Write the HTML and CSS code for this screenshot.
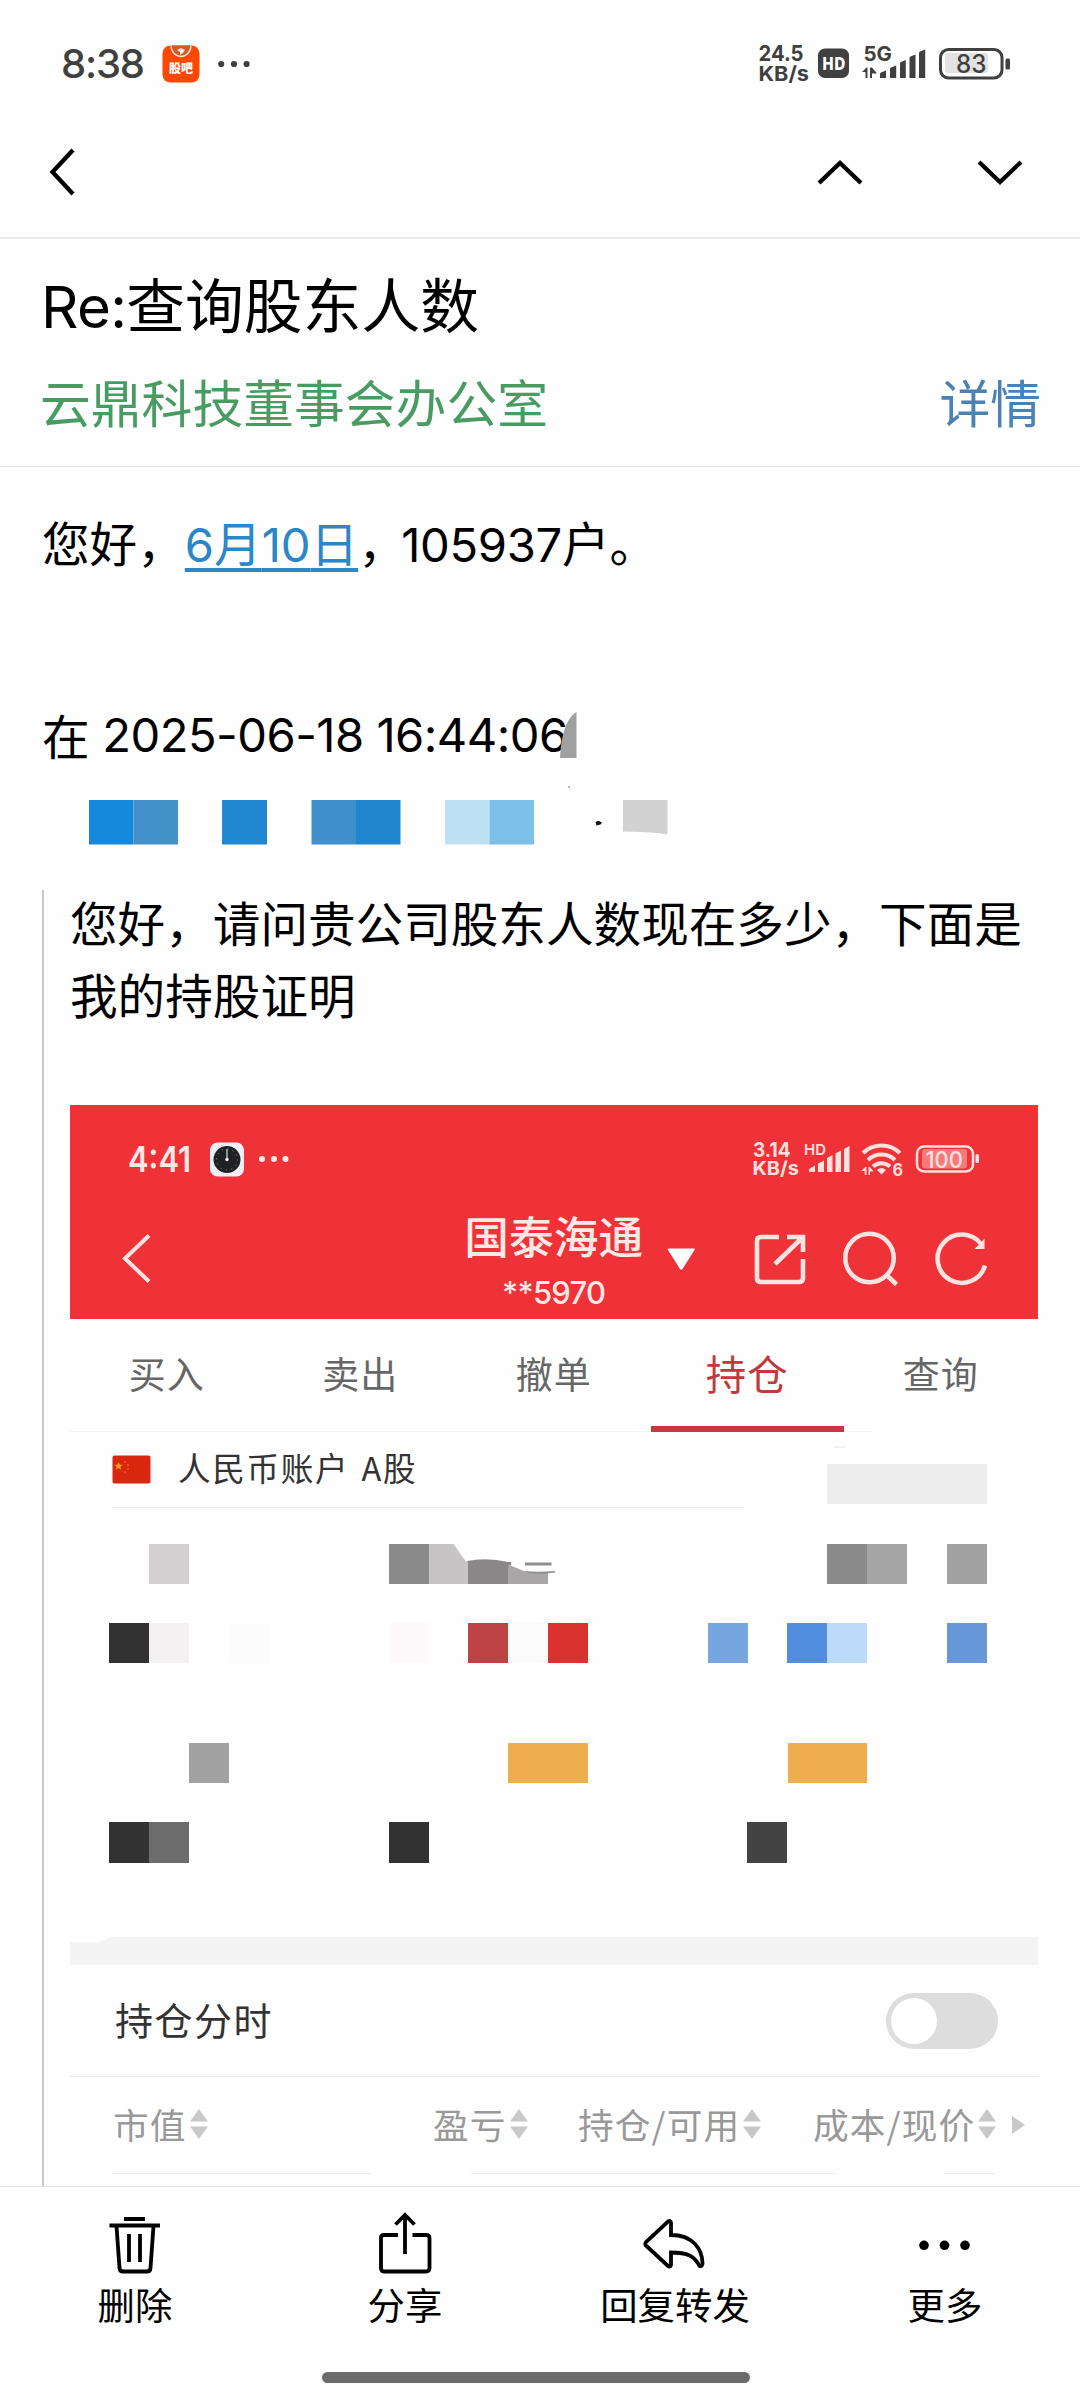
FILE: index.html
```html
<!DOCTYPE html>
<html lang="zh-CN">
<head>
<meta charset="utf-8">
<title>Re:查询股东人数</title>
<link rel="stylesheet" href="styles.css">
</head>
<body>
<div class="screen">
  <header class="status">
    <div class="status-left">
      <span class="time">8:38</span>
      <svg class="app-icon" width="38" height="38" viewBox="0 0 38 38">
        <rect x="0.500" y="0.500" width="37" height="37" rx="8" fill="#fd4703"/>
        <path d="M9 0.500a10 11 0 0 0 20 0Z" fill="#d4582c"/>
        <path d="M9 0.500a10 11 0 0 0 20 0" fill="none" stroke="#ffe6d8" stroke-width="1.300"/>
        <path d="M15 5l4-2 4 2-2 3-3 2v-3z" fill="#ffe6d8"/>
        <text x="7" y="28" class="app-label" textLength="24" lengthAdjust="spacingAndGlyphs">股吧</text>
      </svg>
      <svg width="32" height="8" viewBox="0 0 32 8" fill="#404040"><circle cx="3.200" cy="4" r="3.100"/><circle cx="16" cy="4" r="3.100"/><circle cx="28.600" cy="4" r="3.100"/></svg>
    </div>
    <svg class="status-right" width="252" height="60" viewBox="760 34 252 60" fill="#404040">
      <g class="tiny">
        <text x="759.500" y="61" font-size="22" textLength="45" lengthAdjust="spacingAndGlyphs">24.5</text>
        <text x="759.500" y="81" font-size="20.500" textLength="50.500" lengthAdjust="spacingAndGlyphs">KB/s</text>
        <text x="864.500" y="61" font-size="20.500" textLength="28.500" lengthAdjust="spacingAndGlyphs">5G</text>
      </g>
      <rect x="819" y="48.500" width="31" height="29.500" rx="7"/>
      <text class="hd" x="823" y="70" font-size="17" textLength="23.500" lengthAdjust="spacingAndGlyphs">HD</text>
      <path d="M863 72l4.500-4.500h1v10.500h-2v-6zM871 67.500h2l5 6-5 0v4.500h-2z"/>
      <path d="M881 74q0-1 1-1.500l5-2v7.500h-6zM891 69q0-1 1-1.500l5.200-2v12.500h-6.200zM901 63.500q0-1 1-1.500l4.800-2v18h-5.800zM910.500 58q0-1 1-1.500l5-2v23.500h-6zM920 53q0-1 1-1.500l5.200-2v28.500h-6.200z"/>
      <rect x="946" y="53" width="43" height="20" rx="3" fill="#e3e3e3"/>
      <rect x="941.500" y="49.500" width="61.500" height="28.500" rx="8" fill="none" stroke="#404040" stroke-width="3"/>
      <rect x="1006.500" y="58.500" width="4.500" height="11" rx="1.500"/>
      <text class="batt" x="957" y="72.500" font-size="25" textLength="30.500" lengthAdjust="spacingAndGlyphs">83</text>
    </svg>
  </header>

  <nav class="nav">
    <svg width="26" height="48" viewBox="0 0 26 48"><path d="M24 2L3.500 24 24 46" /></svg>
    <div class="nav-steps">
      <svg width="46" height="25" viewBox="0 0 46 25"><path d="M2 23L23 3l21 20"/></svg>
      <svg width="46" height="25" viewBox="0 0 46 25"><path d="M2 2l21 20L44 2"/></svg>
    </div>
  </nav>

  <section class="mail-head">
    <h1><span class="latin re">Re:</span>查询股东人数</h1>
    <div class="from"><span class="sender">云鼎科技董事会办公室</span><a class="detail">详情</a></div>
  </section>

  <main class="mail">
    <p class="line">您好，<a class="date"><span class="latin">6</span>月<span class="latin">10</span>日</a>，<span class="latin count">105937</span>户。</p>
    <p class="line meta">在 <span class="latin stamp">2025-06-18 16:44:06</span><svg class="smudge" width="18" height="46" viewBox="0 0 18 46"><path d="M0 46C1 24 6 6 16.500 0V46Z" fill="#a0a0a0"/></svg></p>
    <svg class="mosaic" width="600" height="70" viewBox="80 780 600 70">
      <rect x="89" y="800" width="44.500" height="44.500" fill="#1789dc"/><rect x="133.500" y="800" width="44.500" height="44.500" fill="#4490c8"/>
      <rect x="222" y="800" width="45" height="44.500" fill="#2187d1"/>
      <rect x="311.500" y="800" width="44.500" height="44.500" fill="#3e91cd"/><rect x="356" y="800" width="44.500" height="44.500" fill="#2286cf"/>
      <rect x="445" y="800" width="44.500" height="44.500" fill="#bce0f4"/><rect x="489.500" y="800" width="44.500" height="44.500" fill="#7cc0e8"/>
      <path d="M595.500 822l2-1 1.500 0 3 1.500-1.500 2-4 1z" fill="#111"/>
      <path d="M568 786h2v2h-1z" fill="#aaa"/>
      <path d="M623 800h44.500v34.500q-8-1.500-16-2t-28.500-1z" fill="#d2d2d2"/>
    </svg>

    <blockquote class="quote">
      <p class="line">您好，请问贵公司股东人数现在多少，下面是我的持股证明</p>
      <div class="card">
        <div class="card-top">
          <div class="card-status">
            <svg width="165" height="44" viewBox="124 1137 165 44" fill="#ffe9e6">
              <text class="time-s" x="128" y="1172" textLength="63" lengthAdjust="spacingAndGlyphs">4:41</text>
              <rect x="210" y="1142.500" width="34" height="34" rx="7.500" fill="#eef0f8"/>
              <circle cx="227" cy="1159.500" r="13.500" fill="#202124"/>
              <circle cx="227" cy="1159.500" r="10.500" fill="none" stroke="#999" stroke-width="1" stroke-dasharray="1 4.500"/>
              <path d="M226.400 1149h1.200v11h-1.200z" fill="#ddd"/><circle cx="227" cy="1159.500" r="1.700"/>
              <circle cx="262" cy="1159" r="3"/><circle cx="274" cy="1159" r="3"/><circle cx="285.500" cy="1159" r="3"/>
            </svg>
            <svg width="228" height="60" viewBox="752 1129 228 60" fill="#ffe0dd">
              <g class="tiny">
                <text x="753" y="1157" font-size="20" textLength="37.500" lengthAdjust="spacingAndGlyphs">3.14</text>
                <text x="752.500" y="1175" font-size="19" textLength="46.500" lengthAdjust="spacingAndGlyphs">KB/s</text>
                <text x="892.500" y="1175.500" font-size="17" textLength="10.500" lengthAdjust="spacingAndGlyphs">6</text>
              </g>
              <text class="hd-s" x="804" y="1155" textLength="22" lengthAdjust="spacingAndGlyphs">HD</text>
              <path d="M809 1169l6-3.500v6.500h-6zM818 1163.500l6-3v11.500h-6zM827 1158l5.500-3v17H827zM835.500 1153.500l5.500-3v21.500h-5.500zM844 1149l5.500-3v26H844z"/>
              <path d="M863 1153a26.500 26.500 0 0 1 37 0M868 1160a19.500 19.500 0 0 1 27 0M873 1166.500a12.500 12.500 0 0 1 17 0" fill="none" stroke="#ffe0dd" stroke-width="4"/>
              <path d="M877 1170q4.500-4 9 0l-4.500 4.500zM861 1171l4.500-4h1v8h-1.800v-4zM868.500 1167h1.500l3.500 4.500H870v3.500h-1.500z"/>
              <rect x="922" y="1149" width="45" height="19.500" rx="3" fill="#f8797c"/>
              <rect x="917" y="1146.500" width="56" height="25" rx="7" fill="none" stroke="#ffe0dd" stroke-width="2.500"/>
              <rect x="975.500" y="1154" width="3.500" height="9" rx="1.500"/>
              <text class="batt" x="925.500" y="1167.500" font-size="23" textLength="37.500" lengthAdjust="spacingAndGlyphs">100</text>
            </svg>
          </div>
          <div class="card-nav">
            <svg class="card-back" width="30" height="50" viewBox="122 1233 30 50"><path d="M149 1235.500L125 1258.500 149 1281.500" fill="none" stroke="#ffe3e0" stroke-width="4"/></svg>
            <div class="card-title"><strong>国泰海通</strong><span>**5970</span></div>
            <div class="card-tools">
              <svg width="30" height="54" viewBox="666 1232 30 54"><path d="M668.500 1248.500h25.500q1.500 0 .5 1.500l-12 19q-1.200 1.500-2.500 0l-12-19q-1-1.500.5-1.500z" fill="#fff"/></svg>
              <svg width="54" height="54" viewBox="753 1232 54 54"><path d="M779 1237h-18q-4 0-4 4v37q0 4 4 4h38q4 0 4-4v-19M787 1237h16v15M802 1238l-27 26" fill="none" stroke="#ffe3e0" stroke-width="4.600"/></svg>
              <svg width="56" height="54" viewBox="842 1232 56 54"><g fill="none" stroke="#ffe3e0" stroke-width="4.500"><circle cx="869.500" cy="1258" r="24.200"/><path d="M885.500 1274l11 10.500"/></g></svg>
              <svg width="54" height="54" viewBox="935 1232 54 54"><path d="M985 1265.500A24.200 24.200 0 1 1 981 1244" fill="none" stroke="#ffe3e0" stroke-width="4.500"/><path d="M984.500 1238.500v10.500h-10z" fill="#ffe3e0"/></svg>
            </div>
          </div>
        </div>

        <div class="tabs">
          <span>买入</span><span>卖出</span><span>撤单</span><span class="on">持仓</span><span>查询</span>
        </div>

        <div class="account">
          <div class="account-name">
            <svg width="39" height="29" viewBox="0 0 39 29"><rect x="0.500" y="0.500" width="38" height="28" rx="2" fill="#d8260f"/><path d="M6.500 7l1.200 2.800h3l-2.400 1.900.9 3-2.700-1.700-2.700 1.700.9-3-2.400-1.900h3z" fill="#ff9a1e"/><g fill="#f0562a"><circle cx="13" cy="7" r="1"/><circle cx="16" cy="10" r="1"/><circle cx="16" cy="14" r="1"/><circle cx="13" cy="17" r="1"/></g></svg>
            <span>人民币账户 A股</span>
          </div>
        </div>

        <svg class="holdings" width="967" height="505" viewBox="70 1432 967 505" shape-rendering="crispEdges">
          <rect x="834" y="1446" width="11" height="2" fill="#f1f1ef"/>
          <rect x="112.500" y="1507" width="630.500" height="1" fill="#ededea"/>
          <rect x="827" y="1464" width="160" height="40" fill="#ededed"/>
          <rect x="149" y="1544" width="40" height="40" fill="#d2d0d1"/>
          <rect x="389" y="1544" width="40" height="40" fill="#8a8a8a"/>
          <g shape-rendering="auto">
            <path d="M429 1544h24.500l12 17 3 .5V1584h-39.500z" fill="#c6c4c5"/>
            <path d="M467 1561q20-4 41 1h3v3l-3 1v18h-40v-22z" fill="#8a8788"/>
            <path d="M508 1564.500l17 7 4 1h19V1584h-40z" fill="#a8a6a7"/>
            <path d="M525 1562.500h26.500v3H525zM524 1571q14 1.500 31 0v1.500q-14 2-25 .8z" fill="#8f8d8e"/>
          </g>
          <rect x="827" y="1544" width="40" height="40" fill="#8a8a8a"/><rect x="867" y="1544" width="40" height="40" fill="#a5a5a5"/><rect x="947" y="1544" width="40" height="40" fill="#a1a1a1"/>

          <rect x="109" y="1623" width="40" height="40" fill="#323232"/><rect x="149" y="1623" width="40" height="40" fill="#f3f1f2"/><rect x="229" y="1623" width="41" height="40" fill="#fcfcfc"/>
          <rect x="389" y="1623" width="40" height="40" fill="#fdf8f9"/><rect x="468" y="1623" width="40" height="40" fill="#be4143"/><rect x="508" y="1623" width="40" height="40" fill="#fbfbfb"/><rect x="548" y="1623" width="40" height="40" fill="#d9322f"/>
          <rect x="708" y="1623" width="40" height="40" fill="#76a5e0"/><rect x="787" y="1623" width="40" height="40" fill="#528edd"/><rect x="827" y="1623" width="40" height="40" fill="#bcdbfa"/><rect x="947" y="1623" width="40" height="40" fill="#6799da"/>

          <rect x="189" y="1743" width="40" height="40" fill="#a1a1a1"/><rect x="508" y="1743" width="80" height="40" fill="#eeae4d"/><rect x="788" y="1743" width="79" height="40" fill="#eeae4d"/>
          <rect x="109" y="1822" width="40" height="41" fill="#323232"/><rect x="149" y="1822" width="40" height="41" fill="#6c6c6c"/><rect x="389" y="1822" width="40" height="41" fill="#323232"/><rect x="747" y="1822" width="40" height="41" fill="#434343"/>
        </svg>

        <svg class="band" width="968" height="28" viewBox="0 0 968 28"><path d="M0 5h28q8-1 12-5h928v28H0z" fill="#f4f4f4"/></svg>

        <div class="toggle-row"><span>持仓分时</span><i class="toggle"></i></div>

        <div class="cols">
          <span class="col c1">市值<svg width="18" height="30" viewBox="0 0 18 30"><path d="M9 0l9 12.500H0zM9 30l9-12.500H0z"/></svg></span>
          <span class="col c2">盈亏<svg width="18" height="30" viewBox="0 0 18 30"><path d="M9 0l9 12.500H0zM9 30l9-12.500H0z"/></svg></span>
          <span class="col c3">持仓/可用<svg width="18" height="30" viewBox="0 0 18 30"><path d="M9 0l9 12.500H0zM9 30l9-12.500H0z"/></svg></span>
          <span class="col c4">成本/现价<svg width="18" height="30" viewBox="0 0 18 30"><path d="M9 0l9 12.500H0zM9 30l9-12.500H0z"/></svg></span>
          <svg class="more-cols" width="13" height="18" viewBox="0 0 13 18"><path d="M0 0l13 9-13 9z"/></svg>
        </div>
        <svg class="rules" width="968" height="2" viewBox="70 0 968 2" fill="#ededed"><path d="M112.500 0H371v1H112.500zM471 0h366v1H471zM944 0h50v1h-50z"/></svg>
      </div>
    </blockquote>
  </main>

  <footer class="actions">
    <div class="action">
      <svg width="64" height="64" viewBox="103 2211 64 64"><path d="M124 2219h21M109.500 2225.500h50.500M116.500 2226l3 42q.3 3.500 3.500 3.500h24q3.200 0 3.500-3.500l3-42M129 2234v28M140 2234v28"/></svg>
      <span>删除</span>
    </div>
    <div class="action">
      <svg width="64" height="64" viewBox="373 2211 64 64"><path d="M398 2235h-14q-3 0-3 3v30q0 3.500 3 3.500h42q3.500 0 3.500-3.500v-30q0-3-3.500-3h-13.500M405 2254v-38M395.500 2224.500l9.500-9.500 9.500 9.500"/></svg>
      <span>分享</span>
    </div>
    <div class="action">
      <svg width="64" height="64" viewBox="643 2211 64 64"><path d="M668 2221.500q2.500-1.500 3 1v12.500c22 0 31 14 31.500 28q0 4-3 3c-5-10-12-13.500-28.500-13.500v12.500q-.5 2.500-3 1l-21.500-20q-2.500-2 0-4.500z"/></svg>
      <span>回复转发</span>
    </div>
    <div class="action">
      <svg width="64" height="64" viewBox="913 2211 64 64"><circle cx="924" cy="2245.300" r="4.800"/><circle cx="944.500" cy="2245.300" r="4.800"/><circle cx="965" cy="2245.300" r="4.800"/></svg>
      <span>更多</span>
    </div>
  </footer>
  <div class="home-bar"></div>
</div>
</body>
</html>
```
FILE: styles.css
```css
* { box-sizing: border-box; }

body {
  margin: 0;
  background: #fefefe;
  color: #000;
  font-family: "Noto Sans CJK SC", "Noto Sans", sans-serif;
}

svg { display: block; flex: none; overflow: visible; }
p, h1, blockquote { margin: 0; }

.screen {
  width: 1080px;
  height: 2400px;
  overflow: hidden;
  display: flex;
  flex-direction: column;
}

.latin { font-family: Inter, sans-serif; line-height: 1; font-size: 0.99em; }

/* phone status bar */
.status {
  height: 128px;
  padding: 0 69px 0 61px;
  display: flex;
  align-items: center;
  justify-content: space-between;
}
.status-left { display: flex; align-items: center; }
.time {
  width: 101px;
  color: #404040;
  font: 500 40px/60px Inter, sans-serif;
  letter-spacing: -1.2px;
}
.app-icon { margin-right: 18px; }
.app-label { font-size: 12px; font-weight: 900; fill: #fff; }
.tiny { font-family: Inter, sans-serif; font-weight: 700; }
.hd { font-family: "Noto Sans", sans-serif; font-weight: 800; fill: #fff; }
.hd-s { font: 600 15px Inter, sans-serif; }
.batt { font-family: Inter, sans-serif; font-weight: 500; }
.time-s { font: 600 36px Inter, sans-serif; }

/* back / previous / next */
.nav {
  height: 111px;
  padding: 20px 57px 0 49px;
  border-bottom: 2px solid #ebebeb;
  display: flex;
  justify-content: space-between;
}
.nav path { fill: none; stroke: #000; stroke-width: 4.3; }
.nav-steps { display: flex; gap: 114px; padding-top: 12px; }

/* subject */
.mail-head {
  height: 228px;
  padding: 28px 39px 0 40px;
  border-bottom: 1px solid #e4e4e4;
}
h1 { font-size: 58.8px; line-height: 72px; font-weight: 400; padding-left: 1px; }
.re { letter-spacing: -0.7px; }
.from {
  margin-top: 32px;
  display: flex;
  justify-content: space-between;
  font-size: 50.8px;
  line-height: 60px;
}
.sender { color: #489c62; }
.detail { color: #4a82b4; }

/* message */
.mail { flex: none; height: 1719px; padding: 39px 42px 0; }
.line { font-size: 47.6px; line-height: 72px; }
.date { color: #2a87c8; text-decoration: underline; text-decoration-thickness: 4px; text-underline-offset: 6px; }
.date .latin { letter-spacing: 0; }
.count { margin-left: -4.5px; letter-spacing: -0.3px; }
.meta { margin-top: 121px; display: flex; align-items: center; white-space: pre; }
.stamp { margin-left: 2px; letter-spacing: -0.5px; width: 458px; }
.mosaic { margin: 9px 0 0 38px; }

.quote {
  margin-top: 40px;
  height: 1296px;
  border-left: 2px solid #c9c9c9;
  padding-left: 26px;
  display: flex;
  flex-direction: column;
}
.quote .line { margin-top: -4px; width: 960px; }
.card { width: 967.5px; margin-top: 75px; }

/* brokerage screen */
.card-top { height: 214px; background: #ef3138; color: #ffe8e5; }
.card-status { height: 108px; padding: 0 58px 0 54px; display: flex; align-items: center; justify-content: space-between; }
.card-nav { height: 106px; display: grid; grid-template-columns: 1fr auto 1fr; }
.card-back { margin: 20px 0 0 52px; }
.card-title { display: flex; flex-direction: column; align-items: center; }
.card-title strong { font-size: 44.7px; line-height: 46px; font-weight: 500; margin-top: -1px; }
.card-title span { font: 500 31px/34px Inter, sans-serif; letter-spacing: -0.7px; margin-top: 18px; }
.card-tools { display: flex; margin-top: 19px; padding-right: 49px; justify-content: flex-end; }
.card-tools svg:nth-child(1) { margin-right: 57px; }
.card-tools svg:nth-child(2) { margin-right: 35px; }
.card-tools svg:nth-child(3) { margin-right: 37px; }

.tabs {
  height: 113px;
  display: grid;
  grid-template-columns: repeat(5, 1fr);
  text-align: center;
  font-size: 37px;
  letter-spacing: 1px;
  line-height: 108px;
  color: #666;
  background: linear-gradient(#f4f4f4, #f4f4f4) 0 100% / 803px 1px no-repeat;
}
.tabs .on { color: #bf3a3a; font-size: 40.5px; border-bottom: 6px solid #c23b40; height: 113px; }

.account { height: 0; }
.account-name { display: flex; align-items: center; height: 74px; padding-left: 42px; color: #333; position: relative; }
.account-name span { margin-left: 27px; font-size: 32.6px; line-height: 70px; letter-spacing: 1.7px; word-spacing: 3px; margin-top: -4px; }

.toggle-row {
  height: 112px;
  padding: 0 40px 0 45px;
  border-bottom: 1px solid #ebebeb;
  display: flex;
  align-items: center;
  justify-content: space-between;
  font-size: 38px;
  letter-spacing: 1.5px;
  color: #333;
}
.toggle-row span { margin-top: -4px; }
.toggle { width: 112px; height: 56px; border-radius: 28px; background: #ddd; padding: 5px; display: block; }
.toggle::before { content: ""; display: block; width: 46px; height: 46px; border-radius: 50%; background: #fff; }

.cols { height: 96px; padding-left: 43px; display: flex; align-items: center; color: #999; font-size: 35.7px; letter-spacing: 1.1px; line-height: 90px; }
.cols svg { fill: #c8c8c8; }
.col { display: flex; align-items: center; flex: none; margin-top: -2px; }
.col svg { margin-left: 3px; }
.c1 { width: 320px; }
.c2 { width: 145px; }
.c3 { width: 235px; }
.c4 { width: 199px; }

/* bottom toolbar */
.actions {
  height: 186px;
  flex: none;
  border-top: 1px solid #e4e4e4;
  padding-top: 24px;
  display: grid;
  grid-template-columns: repeat(4, 1fr);
  background: #fefefe;
}
.action { display: flex; flex-direction: column; align-items: center; }
.action path { fill: none; stroke: #000; stroke-width: 3.8; }
.action span { margin-top: 4px; font-size: 37.4px; line-height: 50px; }
.home-bar { flex: none; width: 428px; height: 11px; border-radius: 6px; background: #6b6b6b; margin-left: 322px; }
```
